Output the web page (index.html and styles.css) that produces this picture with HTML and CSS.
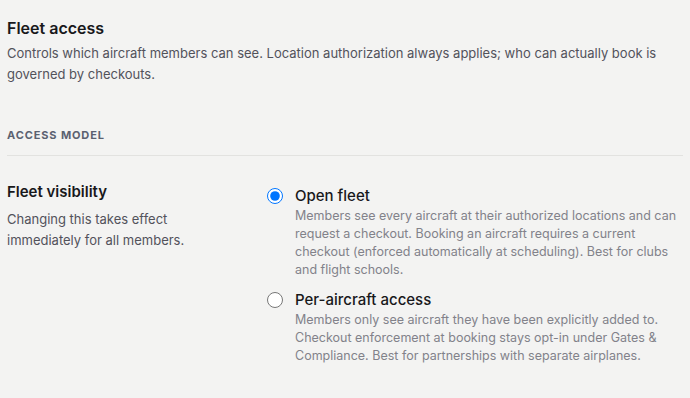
FILE: index.html
```html
<!DOCTYPE html>
<html lang="en">
<head>
<meta charset="utf-8">
<link rel="stylesheet" href="styles.css">
</head>
<body>
<div class="page">
  <header class="intro">
    <h1 class="title">Fleet access</h1>
    <p class="lead">Controls which aircraft members can see. Location authorization always applies; who can actually book is governed by checkouts.</p>
  </header>
  <section class="section">
    <h2 class="eyebrow">Access model</h2>
    <div class="row">
      <div class="row-info">
        <h3 class="row-title">Fleet visibility</h3>
        <p class="row-desc">Changing this takes effect immediately for all members.</p>
      </div>
      <div class="options">
        <label class="option">
          <input class="radio" type="radio" name="fleet" checked>
          <span class="option-body">
            <span class="option-title">Open fleet</span>
            <span class="option-desc">Members see every aircraft at their authorized locations and can request a checkout. Booking an aircraft requires a current checkout (enforced automatically at scheduling). Best for clubs and flight schools.</span>
          </span>
        </label>
        <label class="option">
          <input class="radio" type="radio" name="fleet">
          <span class="option-body">
            <span class="option-title">Per-aircraft access</span>
            <span class="option-desc">Members only see aircraft they have been explicitly added to. Checkout enforcement at booking stays opt-in under Gates &amp; Compliance. Best for partnerships with separate airplanes.</span>
          </span>
        </label>
      </div>
    </div>
  </section>
</div>
</body>
</html>
```
FILE: styles.css
```css
* { box-sizing: border-box; }
html, body { margin: 0; padding: 0; background: #f3f3f2; }
body { font-family: Inter, "Noto Sans", sans-serif; color: #1c1c1e; }
.page { padding: 16px 7px 0 7px; }
.title { margin: 0; font-size: 16px; line-height: 24px; font-weight: 600; color: #18181b; }
.lead { margin: 3px 0 0; font-size: 13px; line-height: 21px; color: #52525b; }
.section { margin-top: 42px; }
.eyebrow { margin: 0; font-size: 11px; line-height: 16px; font-weight: 700; letter-spacing: 0.08em; text-transform: uppercase; color: #5b6170; padding-bottom: 12px; border-bottom: 1px solid #e2e2e0; }
.row { display: grid; grid-template-columns: 236px 1fr; column-gap: 24px; padding-top: 26px; }
.row-title { margin: 0; font-size: 15px; line-height: 20px; font-weight: 600; color: #18181b; }
.row-desc { margin: 7px 0 0; font-size: 13px; line-height: 21px; color: #52525b; }
.options { display: flex; flex-direction: column; gap: 11px; padding-top: 4px; }
.option { display: flex; align-items: flex-start; gap: 12px; cursor: pointer; }
.radio { margin: 2px 0 0; width: 16px; height: 16px; flex: none; accent-color: #0075ff; }
.option-body { display: flex; flex-direction: column; }
.option-title { font-size: 15px; line-height: 20px; font-weight: 500; color: #18181b; }
.option-desc { margin-top: 1px; font-size: 12.5px; line-height: 18px; color: #82828a; }
```
